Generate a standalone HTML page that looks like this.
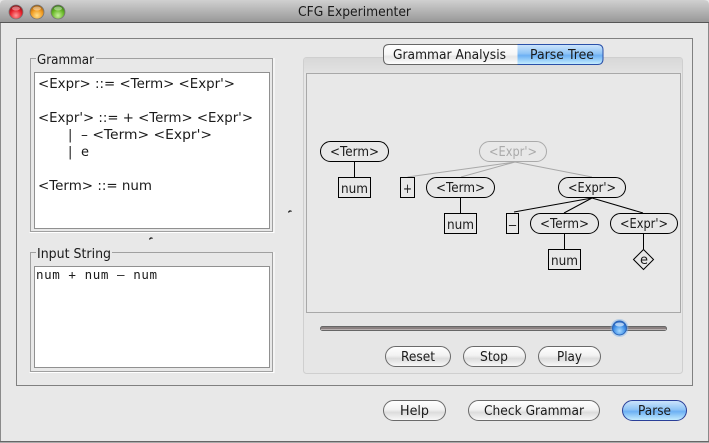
<!DOCTYPE html>
<html><head><meta charset="utf-8"><title>CFG Experimenter</title>
<style>
html,body{margin:0;padding:0;background:#e8e8e8;width:709px;height:443px;overflow:hidden}
svg{display:block}
text{font-family:"DejaVu Sans","Liberation Sans",sans-serif;font-size:13px;fill:#1a1a1a}
.n{fill:#e8e8e8;stroke:#000;stroke-width:1}
.g{fill:#e8e8e8;stroke:#aaa;stroke-width:1}
.b{fill:url(#btn);stroke:#6a6a6a;stroke-width:1}
</style></head><body>
<svg width="709" height="443" viewBox="0 0 709 443" xmlns="http://www.w3.org/2000/svg">
<defs>
<linearGradient id="tb" x1="0" y1="0" x2="0" y2="1"><stop offset="0" stop-color="#d0d0d0"/><stop offset="1" stop-color="#989898"/></linearGradient>
<linearGradient id="btn" x1="0" y1="0" x2="0" y2="1"><stop offset="0" stop-color="#fff"/><stop offset=".45" stop-color="#f2f2f2"/><stop offset=".6" stop-color="#dcdcdc"/><stop offset="1" stop-color="#fafafa"/></linearGradient>
<linearGradient id="blue" x1="0" y1="0" x2="0" y2="1"><stop offset="0" stop-color="#cfe6fc"/><stop offset=".45" stop-color="#8fc4f6"/><stop offset=".55" stop-color="#6cb0f4"/><stop offset="1" stop-color="#c8effe"/></linearGradient>
<linearGradient id="tabw" x1="0" y1="0" x2="0" y2="1"><stop offset="0" stop-color="#fff"/><stop offset=".5" stop-color="#f6f6f6"/><stop offset=".6" stop-color="#e6e6e6"/><stop offset="1" stop-color="#fff"/></linearGradient>
<linearGradient id="tp" x1="0" y1="0" x2="0" y2="1"><stop offset="0" stop-color="#d8d8d8"/><stop offset="1" stop-color="#e2e2e2"/></linearGradient>
<radialGradient id="rd" cx=".5" cy=".75" r=".7"><stop offset="0" stop-color="#ff9a9a"/><stop offset=".6" stop-color="#e6202a"/><stop offset="1" stop-color="#8c1418"/></radialGradient>
<radialGradient id="yl" cx=".5" cy=".75" r=".7"><stop offset="0" stop-color="#ffe08a"/><stop offset=".6" stop-color="#f09a20"/><stop offset="1" stop-color="#a06010"/></radialGradient>
<radialGradient id="gr" cx=".5" cy=".75" r=".7"><stop offset="0" stop-color="#c8f09a"/><stop offset=".6" stop-color="#68b828"/><stop offset="1" stop-color="#3a7a18"/></radialGradient>
<radialGradient id="th" cx=".5" cy=".7" r=".6"><stop offset="0" stop-color="#a8daff"/><stop offset=".7" stop-color="#3f8fe6"/><stop offset="1" stop-color="#2a68c0"/></radialGradient>
</defs>

<rect width="709" height="443" fill="#e8e8e8"/>
<!-- title bar -->
<path d="M0 22V5Q0 0 5 0H704Q709 0 709 5V22Z" fill="url(#tb)"/>
<rect x="0" y="22" width="709" height="1" fill="#555"/>
<rect x="0" y="23" width="1" height="418" fill="#8a8a8a"/>
<rect x="708" y="23" width="1" height="418" fill="#8a8a8a"/>
<rect x="0" y="441" width="709" height="1" fill="#666"/>
<rect x="0" y="442" width="709" height="1" fill="#aaa"/>

<circle cx="16" cy="12" r="7" fill="url(#rd)" stroke="#777" stroke-width=".8"/>
<circle cx="37" cy="12" r="7" fill="url(#yl)" stroke="#777" stroke-width=".8"/>
<circle cx="58" cy="12" r="7" fill="url(#gr)" stroke="#777" stroke-width=".8"/>
<ellipse cx="16" cy="8.500" rx="4" ry="2" fill="#fff" opacity=".4"/>
<ellipse cx="37" cy="8.500" rx="4" ry="2" fill="#fff" opacity=".4"/>
<ellipse cx="58" cy="8.500" rx="4" ry="2" fill="#fff" opacity=".4"/>
<text x="298" y="16" textLength="113" lengthAdjust="spacingAndGlyphs">CFG Experimenter</text>

<!-- outer border -->
<rect x="16.500" y="38.500" width="676" height="347" fill="none" stroke="#808080"/>

<!-- Grammar group -->
<rect x="30.500" y="58.500" width="242" height="173" fill="none" stroke="#a0a0a0"/>
<rect x="29.500" y="232" width="244" height="1" fill="#fff"/>
<rect x="273.500" y="58" width="1" height="175" fill="#fff"/>
<rect x="36" y="52" width="60" height="12" fill="#e8e8e8"/>
<text x="37" y="64" textLength="57" lengthAdjust="spacingAndGlyphs">Grammar</text>
<rect x="34.500" y="72.500" width="235" height="156" fill="#fff" stroke="#909090"/>
<g>
<text x="38" y="88" textLength="197" lengthAdjust="spacingAndGlyphs">&lt;Expr&gt; ::= &lt;Term&gt; &lt;Expr'&gt;</text>
<text x="38" y="122" textLength="215" lengthAdjust="spacingAndGlyphs">&lt;Expr'&gt; ::= + &lt;Term&gt; &lt;Expr'&gt;</text>
<text x="68" y="139">|</text>
<text x="81" y="139" textLength="131" lengthAdjust="spacingAndGlyphs">– &lt;Term&gt; &lt;Expr'&gt;</text>
<text x="68" y="156">|</text>
<text x="81" y="156">e</text>
<text x="38" y="190" textLength="114" lengthAdjust="spacingAndGlyphs">&lt;Term&gt; ::= num</text>
</g>

<!-- Input String group -->
<rect x="30.500" y="252.500" width="242" height="119" fill="none" stroke="#a0a0a0"/>
<rect x="29.500" y="372" width="244" height="1" fill="#fff"/>
<rect x="273.500" y="252" width="1" height="121" fill="#fff"/>
<rect x="36" y="246" width="76" height="12" fill="#e8e8e8"/>
<text x="37" y="258" textLength="74" lengthAdjust="spacingAndGlyphs">Input String</text>
<rect x="34.500" y="266.500" width="235" height="101" fill="#fff" stroke="#909090"/>
<text x="36" y="279" textLength="121" lengthAdjust="spacing" style="font-family:'DejaVu Sans Mono','Liberation Mono',monospace;font-size:12.500px">num + num – num</text>

<!-- split cursors -->
<path d="M288.500 212.500q1-2.500 3-1" fill="none" stroke="#111" stroke-width="1.200"/>
<path d="M149.500 239.500q1-2.500 3-1" fill="none" stroke="#111" stroke-width="1.200"/>

<!-- tab pane -->
<rect x="303.500" y="57.500" width="379" height="316" rx="3" fill="#e6e6e6" stroke="#cfcfcf"/>
<rect x="304" y="58" width="378" height="15" rx="2" fill="url(#tp)"/>
<rect x="306.500" y="73.500" width="374" height="239" fill="#e8e8e8" stroke="#a8a8a8"/>

<!-- tabs -->
<path d="M517.500 44.500H389Q383.500 44.500 383.500 50V59Q383.500 64.500 389 64.500H517.500Z" fill="url(#tabw)"/>
<path d="M517.500 44.500H597.500Q603 44.500 603 50V59Q603 64.500 597.500 64.500H517.500Z" fill="url(#blue)"/>
<path d="M517.500 44.500H389Q383.500 44.500 383.500 50V59Q383.500 64.500 389 64.500H517.500" fill="none" stroke="#666"/>
<path d="M517.500 44.500H597.500Q603 44.500 603 50V59Q603 64.500 597.500 64.500H517.500" fill="none" stroke="#2a50a8"/>
<text x="393" y="59" textLength="113" lengthAdjust="spacingAndGlyphs">Grammar Analysis</text>
<text x="530" y="59" textLength="64" lengthAdjust="spacingAndGlyphs">Parse Tree</text>

<!-- tree lines -->
<g fill="none" stroke="#a8a8a8">
<path d="M515 162L407.500 177M515 162L461 177M515 162L592 177"/>
</g>
<g fill="none" stroke="#000">
<path d="M354.500 162V177M460.500 197V213M564.500 233V249M643.500 233V249"/>
<path d="M592 198L514 212M592 198L564 213M592 198L643 213"/>
</g>

<!-- tree nodes -->
<rect class="n" x="320.500" y="141.500" width="68" height="20" rx="10"/>
<text x="330" y="156" textLength="49" lengthAdjust="spacingAndGlyphs">&lt;Term&gt;</text>
<rect class="n" x="338.500" y="177.500" width="32" height="20"/>
<text x="341" y="193" textLength="27" lengthAdjust="spacingAndGlyphs">num</text>

<rect class="g" x="479.500" y="141.500" width="67" height="20" rx="10"/>
<text x="489" y="156" textLength="48" lengthAdjust="spacingAndGlyphs" style="fill:#aaa">&lt;Expr'&gt;</text>

<rect class="n" x="400.500" y="177.500" width="14" height="20"/>
<text x="403" y="193" textLength="9" lengthAdjust="spacingAndGlyphs">+</text>

<rect class="n" x="426.500" y="177.500" width="68" height="20" rx="10"/>
<text x="436" y="192" textLength="49" lengthAdjust="spacingAndGlyphs">&lt;Term&gt;</text>
<rect class="n" x="444.500" y="213.500" width="32" height="20"/>
<text x="447" y="229" textLength="27" lengthAdjust="spacingAndGlyphs">num</text>

<rect class="n" x="558.500" y="177.500" width="67" height="20" rx="10"/>
<text x="568" y="192" textLength="48" lengthAdjust="spacingAndGlyphs">&lt;Expr'&gt;</text>

<rect class="n" x="506.500" y="213.500" width="12" height="20"/>
<text x="508" y="229" textLength="9" lengthAdjust="spacingAndGlyphs">–</text>

<rect class="n" x="530.500" y="213.500" width="68" height="20" rx="10"/>
<text x="540" y="228" textLength="49" lengthAdjust="spacingAndGlyphs">&lt;Term&gt;</text>
<rect class="n" x="548.500" y="249.500" width="32" height="20"/>
<text x="551" y="265" textLength="27" lengthAdjust="spacingAndGlyphs">num</text>

<rect class="n" x="610.500" y="213.500" width="67" height="20" rx="10"/>
<text x="620" y="228" textLength="48" lengthAdjust="spacingAndGlyphs">&lt;Expr'&gt;</text>
<path class="n" d="M643.500 249.500L653.500 259.500L643.500 269.500L633.500 259.500Z"/>
<text x="640" y="264">e</text>

<!-- slider -->
<rect x="320.500" y="326.500" width="346" height="4" rx="2" fill="#8a8080" stroke="#666"/>
<rect x="321" y="329" width="345" height="1" fill="#b8b0b0"/>
<circle cx="619.500" cy="328" r="9" fill="#7fb4ea" opacity=".45"/>
<circle cx="619.500" cy="328" r="7" fill="url(#th)" stroke="#2a66bc"/>
<ellipse cx="619.500" cy="324.500" rx="4.500" ry="2" fill="#e0f0ff" opacity=".7"/>

<!-- buttons -->
<rect class="b" x="385.500" y="346.500" width="65" height="20" rx="10"/>
<text x="401" y="361" textLength="34" lengthAdjust="spacingAndGlyphs">Reset</text>
<rect class="b" x="463.500" y="346.500" width="62" height="20" rx="10"/>
<text x="480" y="361" textLength="28" lengthAdjust="spacingAndGlyphs">Stop</text>
<rect class="b" x="538.500" y="346.500" width="62" height="20" rx="10"/>
<text x="557" y="361" textLength="25" lengthAdjust="spacingAndGlyphs">Play</text>

<rect class="b" x="383.500" y="400.500" width="62" height="20" rx="10"/>
<text x="400" y="415" textLength="29" lengthAdjust="spacingAndGlyphs">Help</text>
<rect class="b" x="468.500" y="400.500" width="131" height="20" rx="10"/>
<text x="484" y="415" textLength="100" lengthAdjust="spacingAndGlyphs">Check Grammar</text>
<rect x="622.500" y="400.500" width="64" height="20" rx="10" fill="url(#blue)" stroke="#2a3f98"/>
<text x="638" y="415" textLength="33" lengthAdjust="spacingAndGlyphs">Parse</text>
</svg>
</body></html>
